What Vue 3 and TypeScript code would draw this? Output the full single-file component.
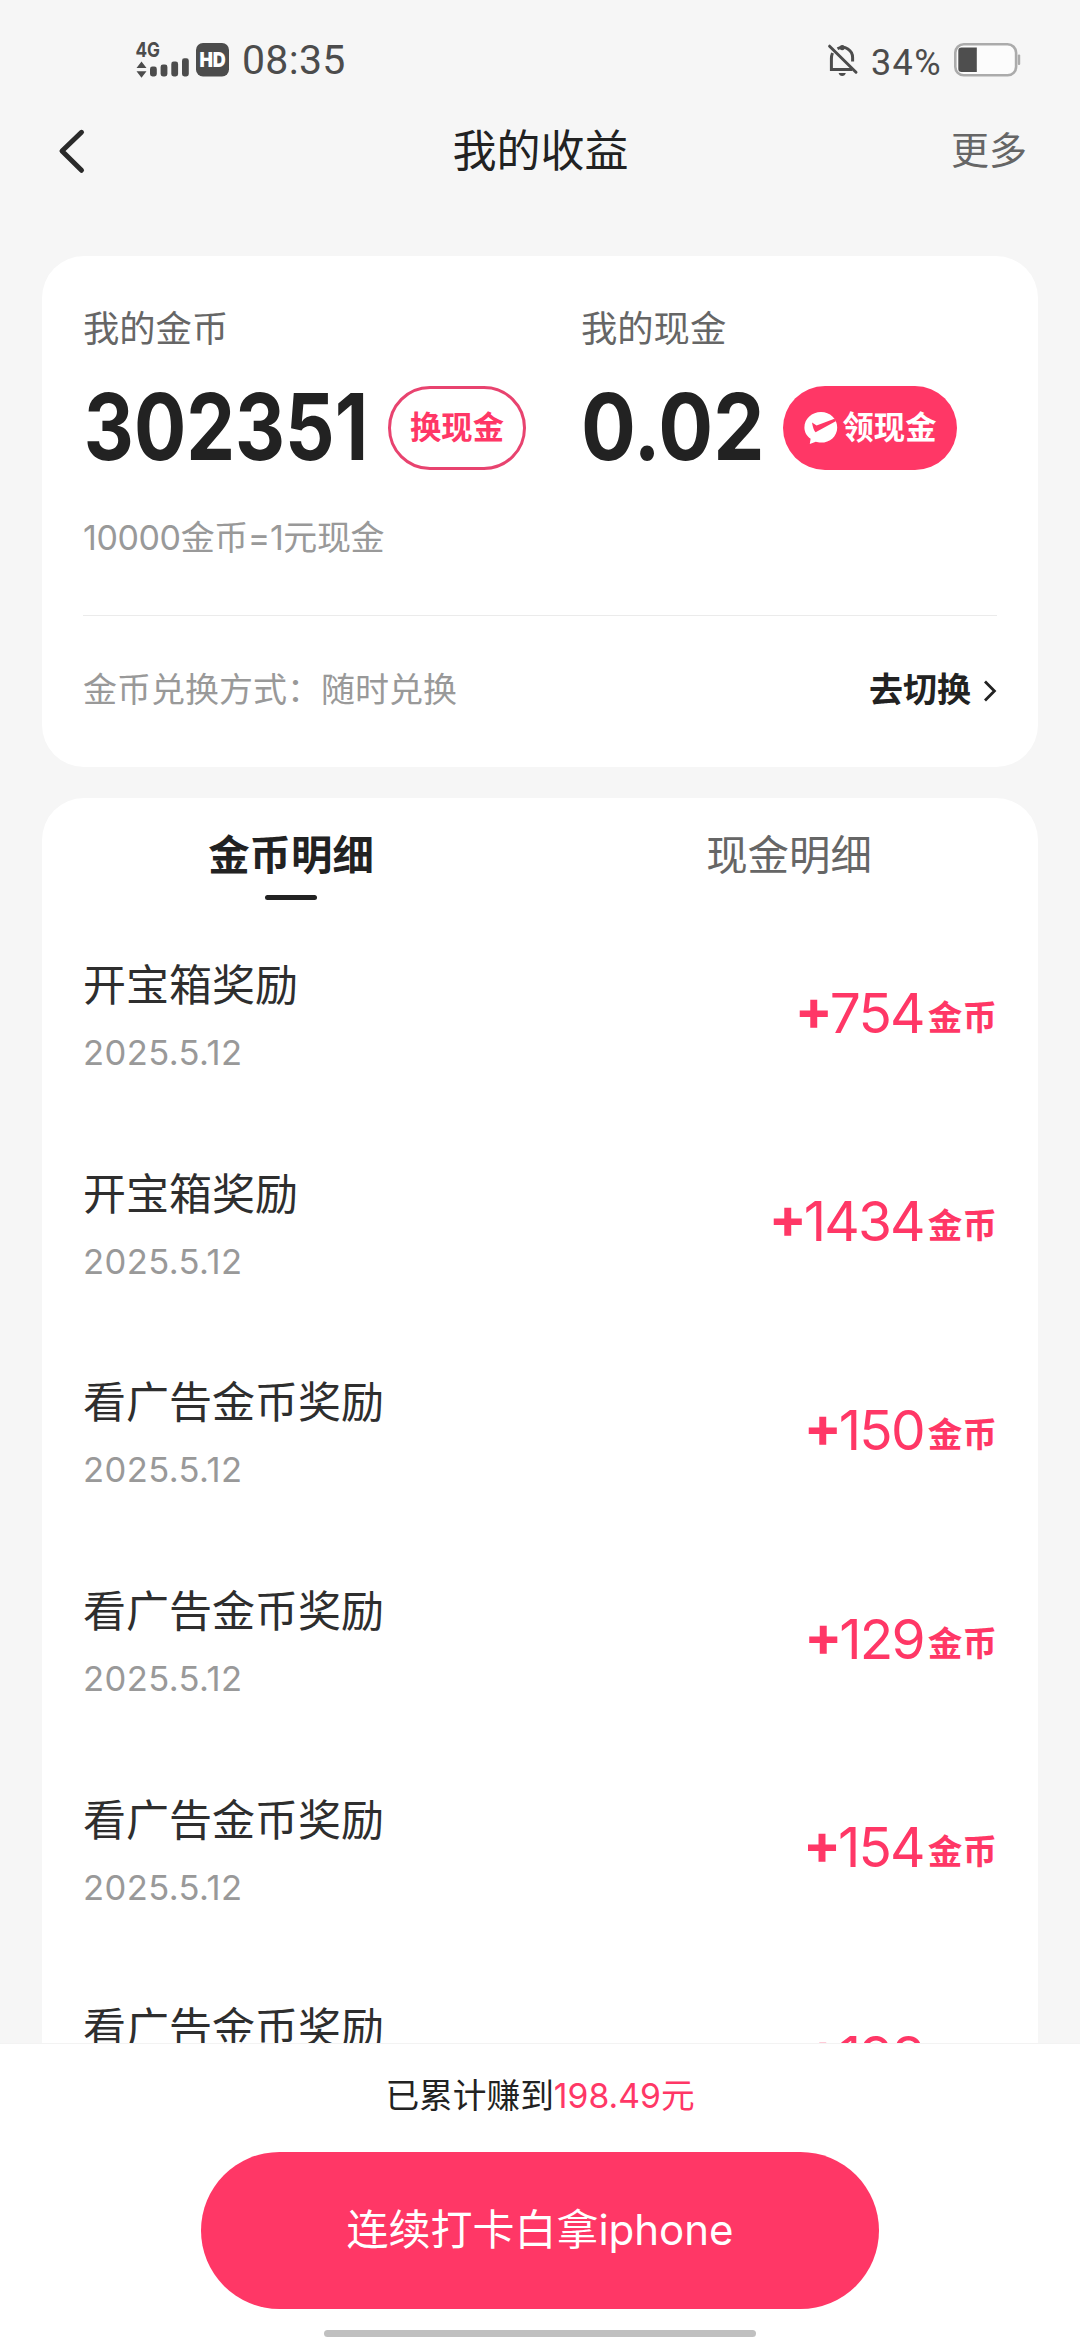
<script setup lang="ts">
interface CoinRecord {
  title: string
  date: string
  amount: number
}

const records: CoinRecord[] = [
  { title: '开宝箱奖励', date: '2025.5.12', amount: 754 },
  { title: '开宝箱奖励', date: '2025.5.12', amount: 1434 },
  { title: '看广告金币奖励', date: '2025.5.12', amount: 150 },
  { title: '看广告金币奖励', date: '2025.5.12', amount: 129 },
  { title: '看广告金币奖励', date: '2025.5.12', amount: 154 },
  { title: '看广告金币奖励', date: '2025.5.12', amount: 198 },
]
</script>

<template>
  <div class="page">
    <header class="status">
      <div class="status-left">
        <svg class="signal" width="98" height="40" viewBox="0 0 98 40" fill="#4c4c4c">
          <text class="net" x="0.5" y="17.3" textLength="24.5" lengthAdjust="spacingAndGlyphs">4G</text>
          <path d="M6.5 21.5 L11.5 28 H1.5 Z M1.5 31.2 H11.5 L6.5 37.7 Z" />
          <rect x="15" y="26.5" width="6.8" height="10" rx="2.4" />
          <rect x="25.6" y="24.5" width="6.8" height="12" rx="2.4" />
          <rect x="36.3" y="21.5" width="6.8" height="15" rx="2.4" />
          <rect x="47" y="18.3" width="6.8" height="18.2" rx="2.4" />
          <rect x="61" y="3" width="33" height="33.5" rx="7" />
          <text class="hd" x="64.4" y="27.4" textLength="26.4" lengthAdjust="spacingAndGlyphs">HD</text>
        </svg>
        <span class="time">08:35</span>
      </div>
      <div class="status-right">
        <svg width="32" height="34" viewBox="0 0 32 34" fill="none" stroke="#4c4c4c" stroke-width="3">
          <path d="M5.5 10 C4.6 12 4.4 13.5 4.4 16 V26.6 H25" />
          <path d="M10.5 5.8 C18 1.6 25.6 7.5 25.6 14.5 V18.5" />
          <path d="M2.6 3.2 L29 29.2" stroke-linecap="round" />
          <circle cx="15.2" cy="4.6" r="2.6" fill="#4c4c4c" stroke="none" />
          <path d="M11.6 30 H18.8 Q18 33 15.2 33 Q12.4 33 11.6 30 Z" fill="#4c4c4c" stroke="none" />
        </svg>
        <span class="percent">34%</span>
        <svg width="68" height="34" viewBox="0 0 68 34">
          <rect x="1.3" y="1.3" width="60.8" height="31" rx="8.5" fill="#fcfcfc" stroke="#ababab" stroke-width="2.6" />
          <path d="M7.5 4.6 H22.8 V29 H7.5 Q4.3 29 4.3 25.8 V7.8 Q4.3 4.6 7.5 4.6 Z" fill="#4e4e4e" />
          <rect x="63.8" y="11.5" width="2.4" height="10.5" rx="1" fill="#ababab" />
        </svg>
      </div>
    </header>

    <nav class="nav">
      <svg class="back" width="30" height="48" viewBox="0 0 30 48" fill="none" stroke="#2a2a2a" stroke-width="5" stroke-linecap="round" stroke-linejoin="round">
        <path d="M24.5 5.3 L5 24 L24.5 43.3" />
      </svg>
      <h1>我的收益</h1>
      <span class="more">更多</span>
    </nav>

    <main class="content">
      <section class="card wallet">
        <div class="balances">
          <div class="balance coins">
            <div class="label">我的金币</div>
            <div class="value">
              <span class="num">302351</span>
              <button class="pill outline"><span>换现金</span></button>
            </div>
          </div>
          <div class="balance cash">
            <div class="label">我的现金</div>
            <div class="value">
              <span class="num">0.02</span>
              <button class="pill solid">
                <svg width="34" height="34" viewBox="0 0 34 34">
                  <path d="M17 1 C26 1 33.2 7.6 33.2 16.4 C33.2 25.2 26 31.6 17 31.6 C14.8 31.6 13.4 31.3 11.8 30.8 L5.8 33 L6.6 27.8 C2.8 25 0.4 21 0.4 16.4 C0.4 7.6 8 1 17 1 Z" fill="#fff" />
                  <path d="M8 11.5 L12.6 14.6 L30.4 7.8 L32.2 10 L11.6 21.2 Q9.4 19.6 8 11.5 Z" fill="#ff3766" />
                </svg>
                <span>领现金</span>
              </button>
            </div>
          </div>
        </div>
        <div class="rate">10000金币=1元现金</div>
        <div class="switch">
          <span class="mode">金币兑换方式：随时兑换</span>
          <span class="go">去切换</span>
          <svg width="14" height="24" viewBox="0 0 14 24" fill="none" stroke="#222" stroke-width="2.8">
            <path d="M2 3.6 L11.4 13 L2 22.4" />
          </svg>
        </div>
      </section>

      <section class="card detail">
        <div class="tabs">
          <div class="tab active">金币明细</div>
          <div class="tab">现金明细</div>
        </div>
        <ul class="list">
          <li v-for="(r, i) in records" :key="i" class="row">
            <div class="info">
              <div class="title">{{ r.title }}</div>
              <div class="date">{{ r.date }}</div>
            </div>
            <div class="amount">
              <span class="plus">+</span><span class="digits">{{ r.amount }}</span><span class="unit">金币</span>
            </div>
          </li>
        </ul>
      </section>
    </main>

    <footer class="footer">
      <div class="total">已累计赚到<em>198.49元</em></div>
      <button class="cta">连续打卡白拿iphone</button>
      <div class="home-bar"></div>
    </footer>
  </div>
</template>

<style>
body {
  margin: 0;
  background: #f6f6f6;
}
</style>

<style scoped>
.page {
  display: flex;
  flex-direction: column;
  width: 1080px;
  height: 2340px;
  overflow: hidden;
  background: #f6f6f6;
  color: #222;
  font-family: Inter, "Noto Sans CJK SC", sans-serif;
  white-space: nowrap;
}
button {
  font-family: inherit;
  border: 0;
  padding: 0;
  margin: 0;
}
svg {
  display: block;
  flex: none;
  overflow: visible;
}

.status {
  display: flex;
  justify-content: space-between;
  flex: none;
  height: 110px;
  box-sizing: border-box;
  padding: 40px 58px 0 135px;
  color: #4c4c4c;
}
.status-left,
.status-right {
  display: flex;
  align-items: flex-start;
}
.net {
  font: 700 20.5px Inter, sans-serif;
}
.hd {
  font: 900 20.5px Inter, sans-serif;
  fill: #fff;
}
.time {
  margin-left: 9px;
  font: 400 41px/40px Roboto, sans-serif;
  letter-spacing: 0.3px;
}
.status-right {
  padding-top: 3px;
}
.percent {
  margin: 0 12px 0 12px;
  font: 400 36px/40px Roboto, sans-serif;
  letter-spacing: 1.4px;
}

.nav {
  display: flex;
  align-items: center;
  flex: none;
  height: 82px;
  padding: 0 53px 0 57px;
}
.back {
  margin-right: 60px;
}
.nav h1 {
  flex: 1;
  margin: 0;
  text-align: center;
  font-size: 44px;
  line-height: 60px;
  font-weight: 400;
}
.more {
  width: 76px;
  margin-left: 17px;
  font-size: 38px;
  line-height: 56px;
  padding-bottom: 2px;
  color: #666;
}

.content {
  flex: 1;
  min-height: 0;
  overflow: hidden;
  padding: 64px 42px 0;
}
.card {
  background: #fff;
  border-radius: 42px;
  padding: 0 41px;
}
.wallet {
  height: 511px;
  box-sizing: border-box;
  padding-top: 45px;
}
.balances {
  display: flex;
}
.coins {
  width: 498px;
}
.label {
  font-size: 36.3px;
  line-height: 56px;
  color: #666;
}
.value {
  display: flex;
  align-items: center;
  height: 84px;
  margin-top: 29px;
}
.num {
  box-sizing: border-box;
  padding-bottom: 3px;
  font-weight: 650;
  font-size: 92px;
  line-height: 84px;
  transform-origin: left center;
}
.coins .num {
  width: 305px;
  padding-left: 1px;
  transform: scaleX(0.843);
}
.cash .num {
  width: 202px;
  transform: scaleX(0.885);
}
.pill {
  display: flex;
  align-items: center;
  justify-content: center;
  flex: none;
  box-sizing: border-box;
  height: 84px;
  border-radius: 42px;
  font-size: 31.3px;
  font-weight: 700;
}
.pill span {
  line-height: 44px;
  padding-bottom: 1px;
}
.outline {
  width: 138px;
  border: 3px solid #e8436f;
  background: #fff;
  color: #ff3766;
}
.solid {
  width: 174px;
  gap: 5px;
  background: #ff3766;
  color: #fff;
}
.rate {
  margin-top: 43px;
  font-size: 34px;
  line-height: 50px;
  letter-spacing: -0.4px;
  color: #999;
}
.switch {
  display: flex;
  align-items: center;
  height: 147px;
  margin-top: 52px;
  border-top: 1px solid #ebebeb;
  font-size: 34px;
  line-height: 50px;
}
.mode {
  flex: 1;
  color: #999;
}
.go {
  margin-right: 12px;
  font-weight: 700;
}

.detail {
  margin-top: 31px;
  padding-top: 27px;
}
.tabs {
  display: flex;
  margin: 0 -41px;
  height: 87px;
}
.tab {
  flex: 1;
  text-align: center;
  font-size: 41.4px;
  line-height: 60px;
  color: #666;
}
.active {
  color: #222;
  font-weight: 700;
}
.active::after {
  content: "";
  display: block;
  width: 52px;
  height: 5px;
  margin: 10px auto 0;
  border-radius: 3px;
  background: #222;
}
.list {
  list-style: none;
  margin: 0;
  padding: 0;
}
.row {
  display: flex;
  align-items: center;
  justify-content: space-between;
  height: 208.6px;
}
.title {
  font-size: 43px;
  line-height: 60px;
  color: #2e2e2e;
}
.date {
  margin-top: 12px;
  font-size: 34.6px;
  line-height: 50px;
  letter-spacing: 0.4px;
  color: #999;
}
.amount {
  display: flex;
  align-items: baseline;
  color: #ff3766;
  line-height: 60px;
}
.plus {
  position: relative;
  top: -3px;
  margin: 0 -3px 0 0;
  font-size: 56px;
  font-weight: 700;
}
.digits {
  font-size: 55px;
  letter-spacing: -1.8px;
}
.unit {
  position: relative;
  top: -3px;
  margin-left: 4px;
  font-size: 34.6px;
  font-weight: 700;
}

.footer {
  display: flex;
  flex-direction: column;
  align-items: center;
  flex: none;
  height: 297px;
  box-sizing: border-box;
  border-top: 1px solid #f3f3f3;
  background: #fff;
}
.total {
  margin-top: 27px;
  font-size: 33.7px;
  line-height: 50px;
}
.total em {
  font-style: normal;
  color: #ff3766;
}
.cta {
  width: 678px;
  height: 157px;
  box-sizing: border-box;
  padding-bottom: 2px;
  margin-top: 31px;
  border-radius: 79px;
  background: #ff3766;
  color: #fff;
  font-size: 42px;
  line-height: 155px;
}
.home-bar {
  width: 432px;
  height: 7px;
  margin-top: 21px;
  border-radius: 4px;
  background: #c0c0c0;
}
</style>
